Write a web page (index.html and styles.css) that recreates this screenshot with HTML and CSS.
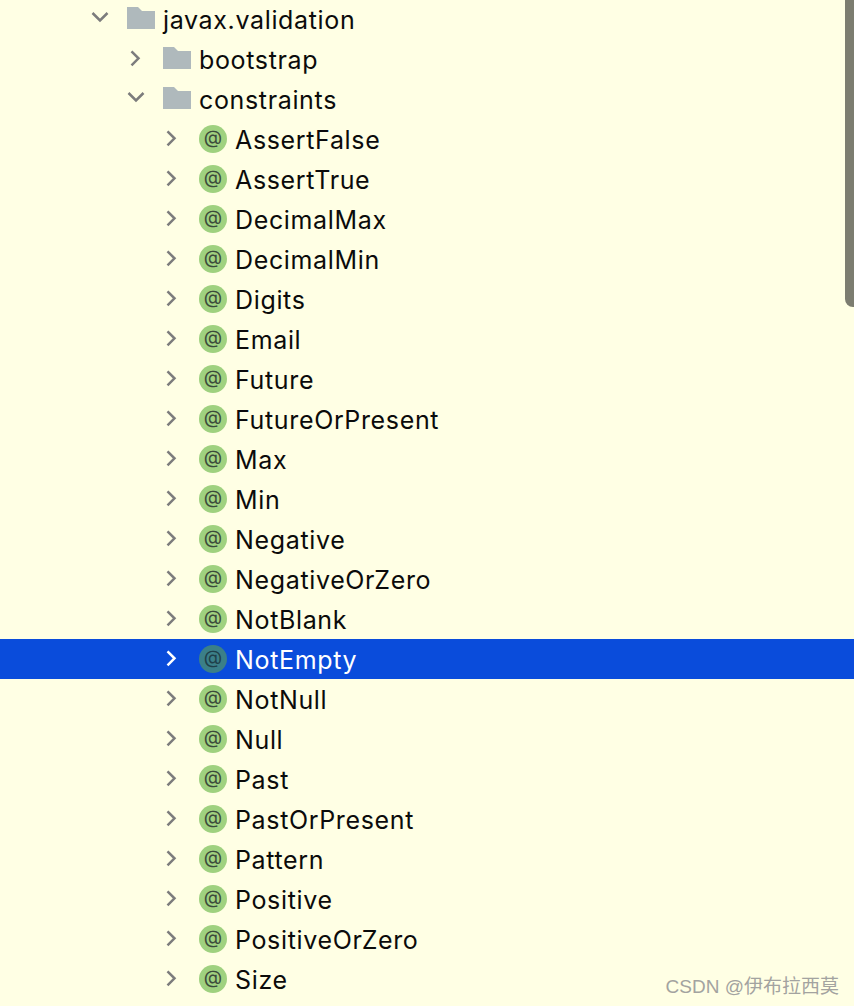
FILE: index.html
```html
<!DOCTYPE html>
<html lang="en">
<head>
<meta charset="utf-8">
<title>javax.validation</title>
<link rel="stylesheet" href="styles.css">
</head>
<body>
<svg class="defs" width="0" height="0" aria-hidden="true">
  <symbol id="right" viewBox="0 0 18 18"><path d="M4.5 2.3 L11.5 9.3 L4.5 16.3" fill="none" stroke="currentColor" stroke-width="2.5"/></symbol>
  <symbol id="down" viewBox="0 0 18 18"><path d="M1.5 4 L9 11.5 L16.5 4" fill="none" stroke="currentColor" stroke-width="2.5"/></symbol>
  <symbol id="folder" viewBox="0 0 28 22"><path d="M0 0 H11 L15 4 H28 V22 H0 Z" fill="#afb9bc"/></symbol>
</svg>
<main class="tree">
  <div class="row d1"><svg class="chev"><use href="#down"/></svg><svg class="folder"><use href="#folder"/></svg><span class="label">javax.validation</span></div>
  <div class="row d2"><svg class="chev"><use href="#right"/></svg><svg class="folder"><use href="#folder"/></svg><span class="label">bootstrap</span></div>
  <div class="row d2"><svg class="chev"><use href="#down"/></svg><svg class="folder"><use href="#folder"/></svg><span class="label">constraints</span></div>
  <div class="row d3"><svg class="chev"><use href="#right"/></svg><span class="anno">@</span><span class="label">AssertFalse</span></div>
  <div class="row d3"><svg class="chev"><use href="#right"/></svg><span class="anno">@</span><span class="label">AssertTrue</span></div>
  <div class="row d3"><svg class="chev"><use href="#right"/></svg><span class="anno">@</span><span class="label">DecimalMax</span></div>
  <div class="row d3"><svg class="chev"><use href="#right"/></svg><span class="anno">@</span><span class="label">DecimalMin</span></div>
  <div class="row d3"><svg class="chev"><use href="#right"/></svg><span class="anno">@</span><span class="label">Digits</span></div>
  <div class="row d3"><svg class="chev"><use href="#right"/></svg><span class="anno">@</span><span class="label">Email</span></div>
  <div class="row d3"><svg class="chev"><use href="#right"/></svg><span class="anno">@</span><span class="label">Future</span></div>
  <div class="row d3"><svg class="chev"><use href="#right"/></svg><span class="anno">@</span><span class="label">FutureOrPresent</span></div>
  <div class="row d3"><svg class="chev"><use href="#right"/></svg><span class="anno">@</span><span class="label">Max</span></div>
  <div class="row d3"><svg class="chev"><use href="#right"/></svg><span class="anno">@</span><span class="label">Min</span></div>
  <div class="row d3"><svg class="chev"><use href="#right"/></svg><span class="anno">@</span><span class="label">Negative</span></div>
  <div class="row d3"><svg class="chev"><use href="#right"/></svg><span class="anno">@</span><span class="label">NegativeOrZero</span></div>
  <div class="row d3"><svg class="chev"><use href="#right"/></svg><span class="anno">@</span><span class="label">NotBlank</span></div>
  <div class="row d3 selected"><svg class="chev"><use href="#right"/></svg><span class="anno">@</span><span class="label">NotEmpty</span></div>
  <div class="row d3"><svg class="chev"><use href="#right"/></svg><span class="anno">@</span><span class="label">NotNull</span></div>
  <div class="row d3"><svg class="chev"><use href="#right"/></svg><span class="anno">@</span><span class="label">Null</span></div>
  <div class="row d3"><svg class="chev"><use href="#right"/></svg><span class="anno">@</span><span class="label">Past</span></div>
  <div class="row d3"><svg class="chev"><use href="#right"/></svg><span class="anno">@</span><span class="label">PastOrPresent</span></div>
  <div class="row d3"><svg class="chev"><use href="#right"/></svg><span class="anno">@</span><span class="label">Pattern</span></div>
  <div class="row d3"><svg class="chev"><use href="#right"/></svg><span class="anno">@</span><span class="label">Positive</span></div>
  <div class="row d3"><svg class="chev"><use href="#right"/></svg><span class="anno">@</span><span class="label">PositiveOrZero</span></div>
  <div class="row d3"><svg class="chev"><use href="#right"/></svg><span class="anno">@</span><span class="label">Size</span></div>
</main>
<div class="scrollbar"></div>
<div class="watermark">CSDN @伊布拉西莫</div>
</body>
</html>
```
FILE: styles.css
```css
html, body {
  margin: 0;
  height: 100%;
  overflow: hidden;
  background: #ffffe4;
}
body {
  position: relative;
  font-family: Inter, "Noto Sans", sans-serif;
  color: #0b0b0b;
}
.defs {
  position: absolute;
}
.tree {
  margin-top: -1px;
}
.row {
  display: flex;
  align-items: center;
  height: 40px;
  font-size: 25px;
  letter-spacing: 0.65px;
}
.label {
  padding-top: 2px;
}
.d1 { padding-left: 91px; }
.d2 { padding-left: 127px; }
.d3 { padding-left: 163px; }
.chev {
  flex: none;
  width: 18px;
  height: 18px;
  margin-top: -2px;
  color: #7c7c7c;
}
.folder {
  flex: none;
  width: 28px;
  height: 22px;
  margin: -2px 8px 0 18px;
}
.anno {
  flex: none;
  width: 28px;
  height: 28px;
  margin: 0 8px 0 18px;
  border-radius: 50%;
  background: #9fd17f;
  color: #3b4a3a;
  font-size: 19px;
  line-height: 26px;
  text-align: center;
  letter-spacing: 0;
}
.selected {
  background: #0a4cdb;
  color: #ffffff;
}
.selected .chev {
  color: #ffffff;
}
.selected .anno {
  background: #3b7f88;
  color: #1f3f4a;
}
.scrollbar {
  position: absolute;
  top: 0;
  right: 0;
  width: 9px;
  height: 307px;
  background: #7c7d70;
  border-bottom-left-radius: 8px;
}
.watermark {
  position: absolute;
  right: 15px;
  bottom: 8px;
  font-family: "Liberation Sans", "Noto Sans CJK SC", sans-serif;
  font-size: 19px;
  color: #a3a3a0;
}
```
